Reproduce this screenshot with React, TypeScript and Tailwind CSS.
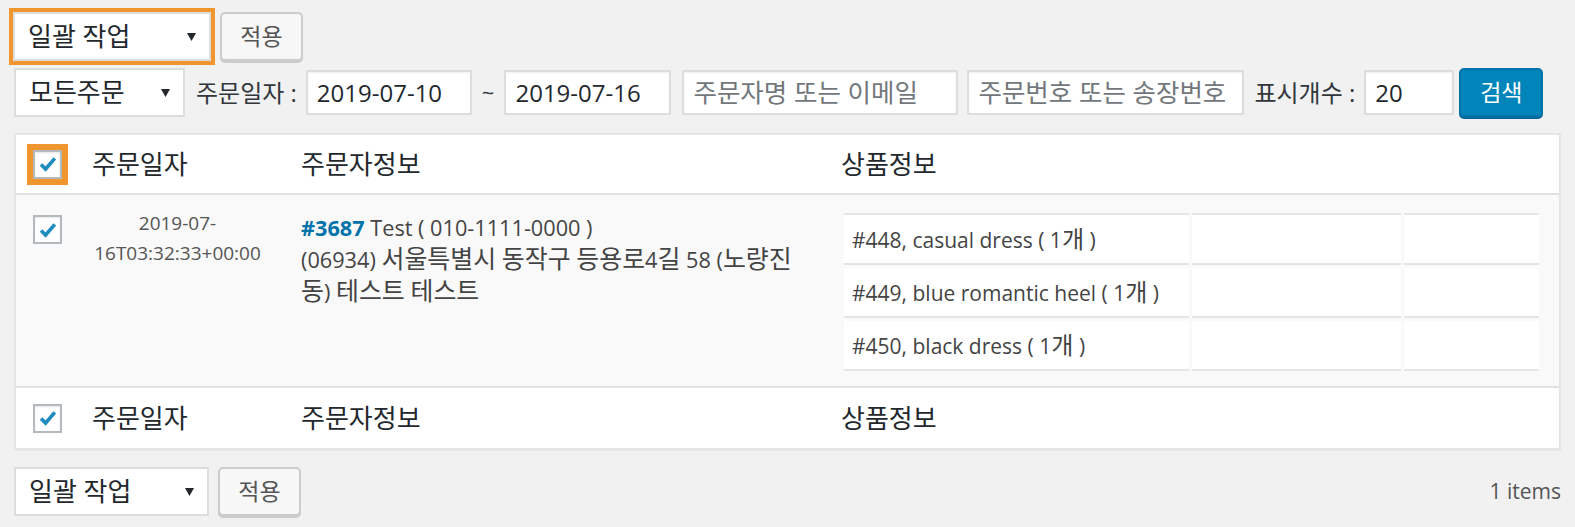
import React from 'react';

// Hangul runs are set a bit larger so they keep the proportions of the Latin text
function Ko({t}: {t: string}) {
  return (
    <>
      {t.split(/([가-힣]+)/).map((part, i) =>
        /[가-힣]/.test(part) ? (
          <span key={i} className="text-[1.15em]">
            {part}
          </span>
        ) : (
          part
        )
      )}
    </>
  );
}

function Arrow() {
  return (
    <svg width="9" height="8" viewBox="0 0 9 8" className="shrink-0">
      <path d="M0 0 H9 L4.5 8 Z" fill="#23282d" />
    </svg>
  );
}

function Select({label, className}: {label: string; className: string}) {
  return (
    <div className={`flex h-[49px] items-center justify-between border-2 border-[#dddddd] bg-white pl-[13px] pr-[13px] text-[26px] text-[#23282d] ${className}`}>
      <span>{label}</span>
      <Arrow />
    </div>
  );
}

function ApplyButton() {
  return (
    <button className="flex h-[49px] w-[83px] items-center justify-center rounded-[5px] border-2 border-[#cccccc] bg-[#f7f7f7] text-[23px] text-[#555555] shadow-[0_2px_0_#cccccc]">
      적용
    </button>
  );
}

function Checkbox({highlight}: {highlight?: boolean}) {
  return (
    <div
      className={`flex h-[29px] w-[29px] items-center justify-center border-2 border-[#b4b9be] bg-white shadow-[inset_0_1px_2px_rgba(0,0,0,0.1)] ${
        highlight ? 'outline-[6px] outline-solid outline-[#f0962f]' : ''
      }`}
    >
      <svg width="20" height="20" viewBox="0 0 20 20">
        <path d="M3 10.4 L7.6 15 L16.8 4.4" fill="none" stroke="#1e8cbe" strokeWidth="3.6" />
      </svg>
    </div>
  );
}

function TextInput({value, placeholder, className}: {value?: string; placeholder?: string; className: string}) {
  return (
    <div className={`flex h-[45px] items-center overflow-hidden border-2 border-[#dddddd] bg-white px-[9px] shadow-[inset_0_1px_2px_rgba(0,0,0,0.07)] ${className}`}>
      {value ? (
        <span className="text-[24px] text-[#23282d]">{value}</span>
      ) : (
        <span className="whitespace-nowrap text-[25.5px] text-[#72777c]">{placeholder}</span>
      )}
    </div>
  );
}

function HeaderCells() {
  return (
    <>
      <div className="w-[209px] pl-[12px]">주문일자</div>
      <div className="w-[540px] pl-[12px]">주문자정보</div>
      <div className="flex-1 pl-[12px]">상품정보</div>
    </>
  );
}

const items = ['#448, casual dress ( 1개 )', '#449, blue romantic heel ( 1개 )', '#450, black dress ( 1개 )'];

export default function App() {
  return (
    <div className="min-h-screen bg-[#f1f1f1] px-[14px] pt-[12px] font-['Open_Sans','Noto_Sans_CJK_KR',sans-serif] text-[#32373c]">
      {/* bulk actions */}
      <div className="flex items-center gap-[9px]">
        <Select label="일괄 작업" className="w-[198px] -ml-px outline-[4px] outline-solid outline-[#f0962f]" />
        <ApplyButton />
      </div>

      {/* filters */}
      <div className="mt-[7px] flex items-center">
        <Select label="모든주문" className="w-[171px]" />
        <span className="ml-[11px] text-[24px]">주문일자 :</span>
        <TextInput value="2019-07-10" className="ml-[9px] w-[166px]" />
        <span className="mx-[10px] text-[22px]">~</span>
        <TextInput value="2019-07-16" className="w-[167px]" />
        <TextInput placeholder="주문자명 또는 이메일" className="ml-[11px] w-[276px]" />
        <TextInput placeholder="주문번호 또는 송장번호" className="ml-[9px] w-[277px]" />
        <span className="ml-[10px] text-[24px]">표시개수 :</span>
        <TextInput value="20" className="ml-[9px] w-[90px]" />
        <button className="ml-[5px] flex h-[49px] w-[84px] items-center justify-center rounded-[5px] border-2 border-[#0073aa] bg-[#0085ba] text-[23px] text-white shadow-[0_2px_0_#006799]">
          검색
        </button>
      </div>

      {/* list table */}
      <div className="mt-[16px] border-2 border-[#e5e5e5] bg-white shadow-[0_1px_1px_rgba(0,0,0,0.04)]">
        <div className="flex h-[60px] items-center border-b-2 border-[#e1e1e1] text-[26px] text-[#23282d]">
          <div className="w-[64px] pl-[17px]">
            <Checkbox highlight />
          </div>
          <HeaderCells />
        </div>

        <div className="flex border-b-2 border-[#e1e1e1] bg-[#f9f9f9]">
          <div className="w-[64px] pl-[17px] pt-[20px]">
            <Checkbox />
          </div>
          <div className="w-[209px] pl-[12px] pr-[26px] pt-[13px] text-center text-[19px] leading-[30px] text-[#555555]">
            2019-07-
            <br />
            16T03:32:33+00:00
          </div>
          <div className="w-[540px] pl-[12px] pt-[17px] text-[21.7px] leading-[31px] text-[#444444]">
            <div className="whitespace-nowrap">
              <a className="font-bold text-[#0073aa]">#3687</a> Test ( 010-1111-0000 )
            </div>
            <div className="whitespace-nowrap">
              <Ko t="(06934) 서울특별시 동작구 등용로4길 58 (노량진" />
            </div>
            <div className="whitespace-nowrap">
              <Ko t="동) 테스트 테스트" />
            </div>
          </div>
          <div className="flex-1 pl-[12px] pr-[17px] pt-[15px] pb-[12px]">
            <table className="w-full border-separate border-spacing-[3px] text-[21px] text-[#444444]">
              <tbody>
                {items.map((it, i) => (
                  <tr key={it}>
                    {['w-[345px]', 'w-[209px]', ''].map((w, j) => (
                      <td
                        key={j}
                        className={`border-b-2 border-[#e5e5e5] bg-white px-[8px] ${w} ${i === 0 ? 'h-[52px] border-t-2' : 'h-[50px]'}`}
                      >
                        {j === 0 ? <Ko t={it} /> : ''}
                      </td>
                    ))}
                  </tr>
                ))}
              </tbody>
            </table>
          </div>
        </div>

        <div className="flex h-[60px] items-center text-[26px] text-[#23282d]">
          <div className="w-[64px] pl-[17px]">
            <Checkbox />
          </div>
          <HeaderCells />
        </div>
      </div>

      {/* bottom actions */}
      <div className="mt-[17px] flex items-center justify-between">
        <div className="flex items-center gap-[9px]">
          <Select label="일괄 작업" className="w-[195px]" />
          <ApplyButton />
        </div>
        <span className="text-[21px] text-[#555555]">1 items</span>
      </div>
    </div>
  );
}
